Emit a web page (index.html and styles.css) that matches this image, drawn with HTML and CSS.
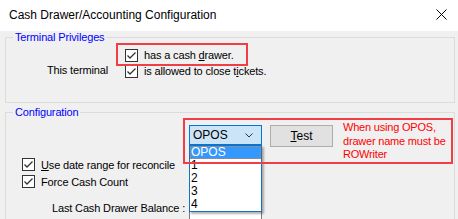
FILE: index.html
```html
<!DOCTYPE html>
<html lang="en">
<head>
    <meta charset="UTF-8">
    <title>Cash Drawer/Accounting Configuration</title>
    <link rel="stylesheet" href="styles.css">
</head>
<body>
    <div class="window">
        <div class="titlebar">
            <span class="title">Cash Drawer/Accounting Configuration</span>
            <svg class="close" width="11" height="11" viewBox="0 0 11 11">
                <path d="M0.5 0.5 L10.5 10.5 M10.5 0.5 L0.5 10.5" stroke="#000" stroke-width="1" fill="none"/>
            </svg>
        </div>

        <fieldset class="group privileges">
            <legend>Terminal Privileges</legend>
            <div class="priv-row">
                <span class="terminal-label">This terminal</span>
                <div class="checks">
                    <label class="check">
                        <span class="box"><svg width="11" height="11" viewBox="0 0 11 11"><path d="M1.5 5.5 L4 8 L9.5 2.5" stroke="#333" stroke-width="1.3" fill="none"/></svg></span>
                        <span>has a cash <u>d</u>rawer.</span>
                    </label>
                    <label class="check">
                        <span class="box"><svg width="11" height="11" viewBox="0 0 11 11"><path d="M1.5 5.5 L4 8 L9.5 2.5" stroke="#333" stroke-width="1.3" fill="none"/></svg></span>
                        <span>is allowed to close t<u>i</u>ckets.</span>
                    </label>
                </div>
            </div>
        </fieldset>

        <fieldset class="group config">
            <legend>Configuration</legend>
            <div class="config-top">
                <div class="config-left">
                    <label class="check tall">
                        <span class="box"><svg width="11" height="11" viewBox="0 0 11 11"><path d="M1.5 5.5 L4 8 L9.5 2.5" stroke="#333" stroke-width="1.3" fill="none"/></svg></span>
                        <span><u>U</u>se date range for reconcile</span>
                    </label>
                    <label class="check tall">
                        <span class="box"><svg width="11" height="11" viewBox="0 0 11 11"><path d="M1.5 5.5 L4 8 L9.5 2.5" stroke="#333" stroke-width="1.3" fill="none"/></svg></span>
                        <span>Force Cash Count</span>
                    </label>
                </div>
                <div class="config-right">
                    <div class="combo">
                        <span>OPOS</span>
                        <svg class="chevron" width="8" height="5" viewBox="0 0 8 5">
                            <path d="M0.5 0.5 L4 4 L7.5 0.5" stroke="#333" stroke-width="1" fill="none"/>
                        </svg>
                        <ul class="droplist">
                            <li class="selected">OPOS</li>
                            <li>1</li>
                            <li>2</li>
                            <li>3</li>
                            <li>4</li>
                        </ul>
                    </div>
                    <button class="btn" type="button"><u>T</u>est</button>
                    <p class="note">When using OPOS,<br>drawer name must be<br>ROWriter</p>
                </div>
            </div>
            <div class="balance-row">
                <span class="balance-label">Last Cash Drawer Balance :</span>
                <span class="textbox"></span>
            </div>
        </fieldset>

        <div class="annot annot-drawer"></div>
        <div class="annot annot-opos"></div>
    </div>
</body>
</html>
```

FILE: styles.css
```css
body {
    margin: 0;
    background: #f0f0f0;
    font-family: "Liberation Sans", Arial, sans-serif;
    font-size: 11px;
    letter-spacing: -0.15px;
    color: #000;
}

.window {
    position: relative;
    width: 458px;
    height: 219px;
    overflow: hidden;
    background: #f0f0f0;
}

.titlebar {
    height: 31px;
    background: #fff;
    display: flex;
    align-items: center;
    justify-content: space-between;
    padding: 0 11px 0 9px;
}

.title {
    font-size: 12px;
    letter-spacing: 0;
    margin-top: -1px;
}

.close {
    margin-top: -2px;
}

.group {
    margin: 0 3px 0 5px;
    border: 1px solid #dcdcdc;
    padding: 0;
    min-inline-size: 0;
}

.group legend {
    color: #0000ff;
    line-height: 12px;
    padding: 0 2px;
    margin-left: 7px;
}

.privileges {
    padding: 4px 0 23px;
}

.priv-row {
    display: flex;
}

.terminal-label {
    width: 78px;
    margin-left: 41px;
    padding-top: 16px;
    line-height: 14px;
}

.check {
    display: flex;
    align-items: center;
    height: 16px;
    white-space: nowrap;
}

.check.tall {
    height: 17px;
}

.box {
    width: 11px;
    height: 11px;
    border: 1px solid #333;
    background: #fff;
    margin-right: 6px;
    display: flex;
    flex: none;
}

u {
    text-decoration-thickness: 1px;
    text-underline-offset: 1px;
}

.config {
    margin-top: 3px;
    padding: 0 0 10px;
}

.config-top {
    display: flex;
}

.config-left {
    width: 183px;
    flex: none;
    box-sizing: border-box;
    padding: 38px 0 0 16px;
}

.config-right {
    display: flex;
    align-items: flex-start;
}

.combo {
    position: relative;
    width: 73px;
    height: 20px;
    flex: none;
    box-sizing: border-box;
    margin-top: 7px;
    border: 1px solid #0078d7;
    background: #cce4f7;
    display: flex;
    align-items: center;
    justify-content: space-between;
    padding: 0 8px 0 3px;
    font-size: 12px;
    letter-spacing: 0;
}

.droplist {
    position: absolute;
    top: 19px;
    left: -1px;
    width: 73px;
    height: 67px;
    box-sizing: border-box;
    margin: 0;
    padding: 0;
    list-style: none;
    background: #fff;
    border: 1px solid #1a6fc0;
    box-shadow: 2px 2px 2px rgba(0, 0, 0, 0.3);
    font-size: 12px;
}

.droplist li {
    height: 13px;
    line-height: 13px;
    padding-left: 1px;
}

.droplist li.selected {
    background: #3399ff;
    color: #fff;
    outline: 1px dotted #e08030;
    outline-offset: -1px;
}

.btn {
    width: 63px;
    height: 22px;
    flex: none;
    margin: 7px 0 0 8px;
    padding: 0;
    border: 1px solid #adadad;
    background: #e1e1e1;
    font-family: inherit;
    font-size: 12px;
    color: #000;
}

.note {
    margin: 3px 0 0 10px;
    color: #ff0000;
    font-size: 11px;
    letter-spacing: -0.2px;
    line-height: 13.5px;
    white-space: nowrap;
}

.balance-row {
    display: flex;
    margin-top: 11px;
}

.balance-label {
    width: 183px;
    flex: none;
    box-sizing: border-box;
    padding-left: 46px;
    line-height: 14px;
    white-space: nowrap;
}

.textbox {
    width: 73px;
    height: 20px;
    flex: none;
    box-sizing: border-box;
    border: 1px solid #7a7a7a;
    background: #fff;
}

.annot {
    position: absolute;
    border: 2px solid #ef3e46;
    box-sizing: border-box;
    pointer-events: none;
}

.annot-drawer {
    left: 116px;
    top: 43px;
    width: 132px;
    height: 23px;
}

.annot-opos {
    left: 183px;
    top: 118px;
    width: 270px;
    height: 46px;
}
```
